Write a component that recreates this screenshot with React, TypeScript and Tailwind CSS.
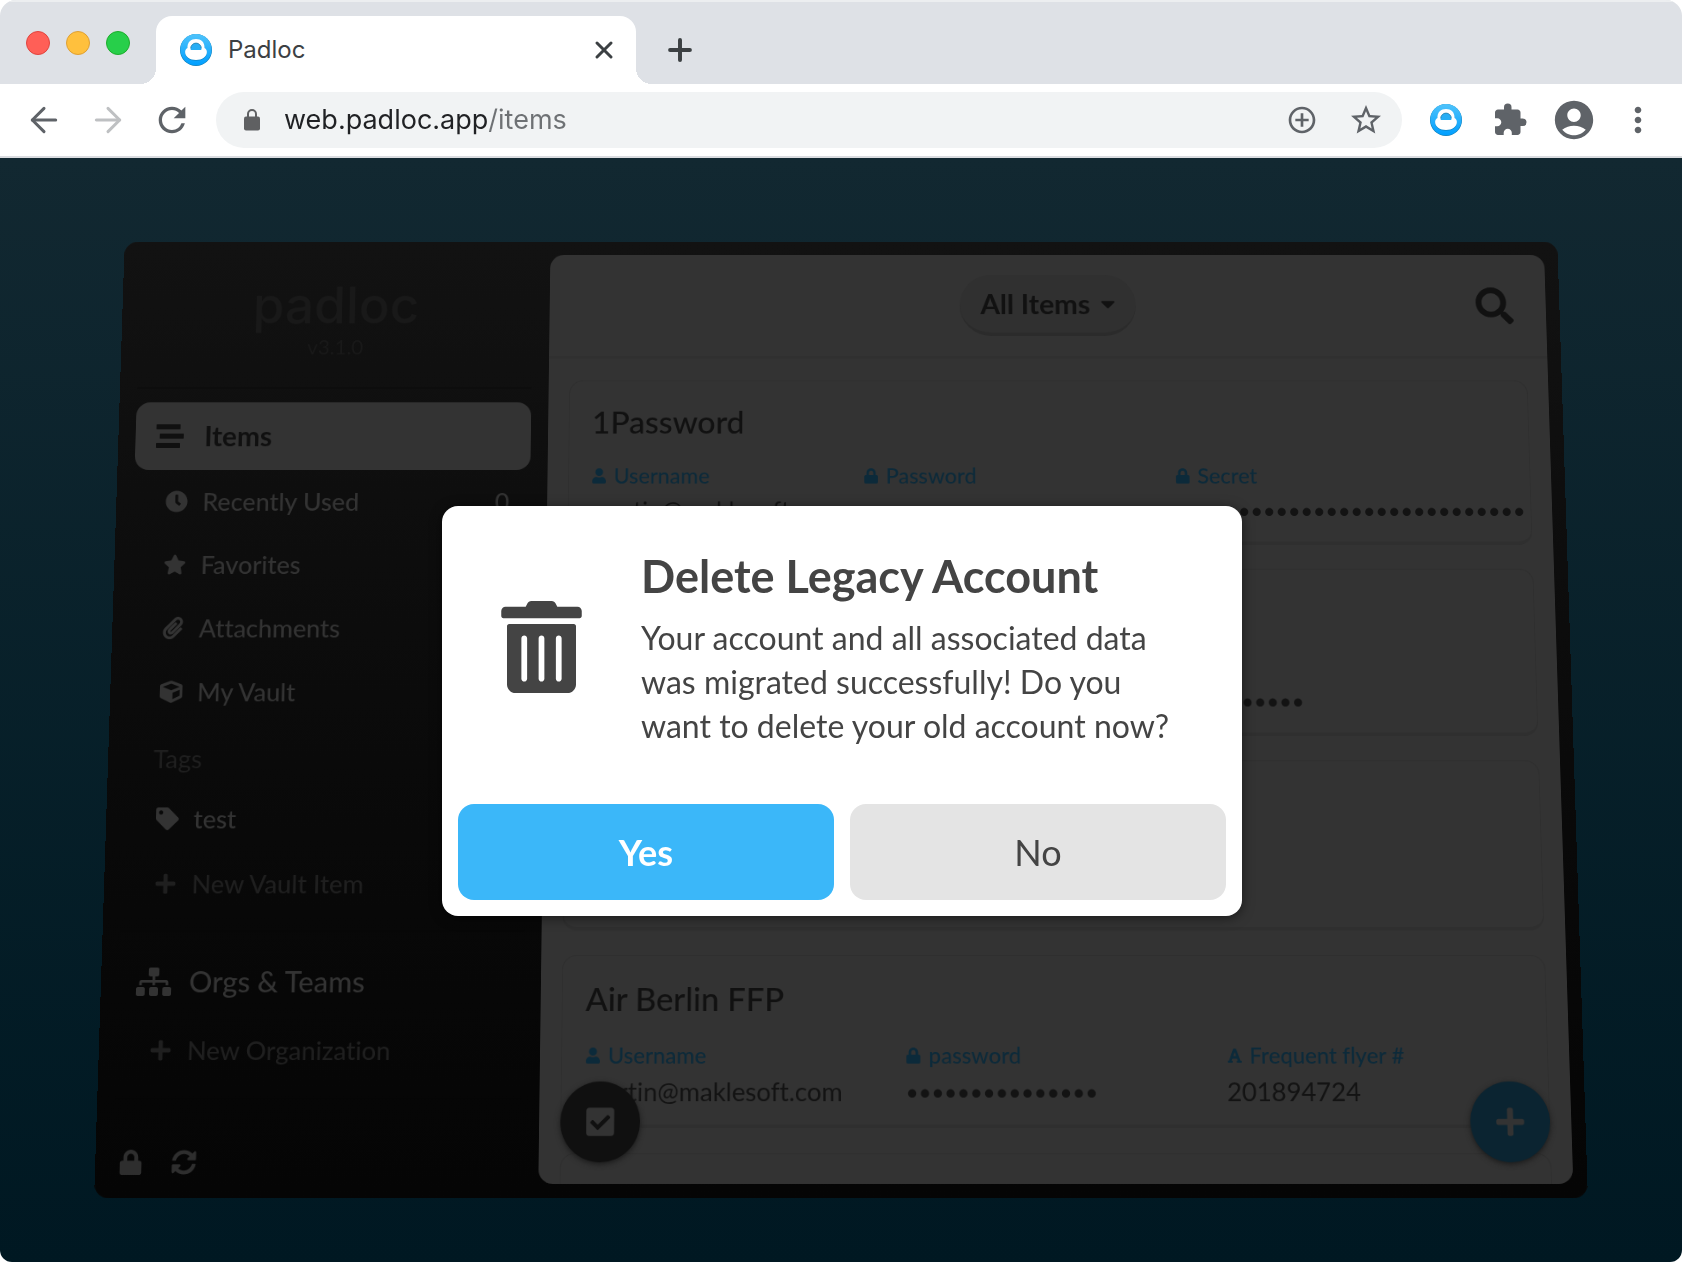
import { useId, type ReactNode } from "react";
import { ArrowLeft, ArrowRight, Plus, X } from "lucide-react";
import type { IconType } from "react-icons";
import {
  MdAccountCircle,
  MdAddCircleOutline,
  MdExtension,
  MdMoreVert,
  MdRefresh,
  MdStarBorder,
} from "react-icons/md";
import {
  FaCaretDown,
  FaCheckSquare,
  FaClock,
  FaCube,
  FaFont,
  FaLock,
  FaPaperclip,
  FaPlus,
  FaSearch,
  FaSitemap,
  FaStar,
  FaStream,
  FaSyncAlt,
  FaTag,
  FaUser,
} from "react-icons/fa";

function PadlocMark() {
  const id = useId();
  return (
    <svg viewBox="0 0 32 32" className="size-8 shrink-0" aria-hidden="true">
      <defs>
        <linearGradient id={id} x1="0" y1="0" x2="0" y2="1">
          <stop offset="0" stopColor="#4fc3fb" />
          <stop offset="1" stopColor="#009fff" />
        </linearGradient>
      </defs>
      <circle cx="16" cy="16" r="16" fill="#1580b8" />
      <circle cx="16" cy="15.6" r="15.6" fill={`url(#${id})`} />
      <path
        d="M7.4 14.8C7.200 9 11 6 16 6s8.800 3 8.600 8.800c1.500 1 2.300 2.400 2.300 4 0 4.600-4.600 8-10.900 8S5.100 23.400 5.100 18.800c0-1.600.8-3 2.300-4z"
        fill="#0f86c9"
      />
      <path
        d="M7.4 14C7.200 8.200 11 5 16 5s8.800 3.200 8.600 9c1.500 1 2.300 2.400 2.300 4 0 4.600-4.600 8-10.900 8S5.100 22.600 5.100 18c0-1.600.8-3 2.300-4z"
        fill="#fff"
      />
      <path d="M10.700 16v-1.600a5.300 5.300 0 0 1 10.600 0V16z" fill="#27aef5" />
      <path d="M10.700 14.400a5.300 5.300 0 0 1 10.600 0" fill="none" stroke="#1878a8" strokeWidth=".8" />
    </svg>
  );
}

function SiteLock() {
  return (
    <svg viewBox="0 0 16 22" className="h-[22px] w-4 shrink-0 text-[#5f6062]" aria-hidden="true">
      <rect y="7.500" width="16" height="14" rx="2" fill="currentColor" />
      <path d="M4 8.500V5a4 4 0 0 1 8 0v3.500" fill="none" stroke="currentColor" strokeWidth="2" />
    </svg>
  );
}

function TrashIcon() {
  return (
    <svg viewBox="0 0 448 512" className="h-[92px] w-[81px] fill-current" aria-hidden="true">
      <path d="M0 84V56c0-13.300 10.700-24 24-24h112l9.400-18.700c4-8.200 12.300-13.300 21.400-13.300h114.300c9.100 0 17.400 5.100 21.500 13.300L312 32h112c13.300 0 24 10.700 24 24v28c0 6.600-5.400 12-12 12H12C5.400 96 0 90.600 0 84zm416 56v324c0 26.500-21.500 48-48 48H80c-26.500 0-48-21.500-48-48V140c0-6.600 5.400-12 12-12h360c6.600 0 12 5.400 12 12zm-272 68c0-8.800-7.200-16-16-16s-16 7.200-16 16v224c0 8.800 7.200 16 16 16s16-7.200 16-16V208zm96 0c0-8.800-7.200-16-16-16s-16 7.200-16 16v224c0 8.800 7.200 16 16 16s16-7.200 16-16V208zm96 0c0-8.800-7.200-16-16-16s-16 7.200-16 16v224c0 8.800 7.200 16 16 16s16-7.200 16-16V208z" />
    </svg>
  );
}

function TabStrip() {
  return (
    <div className="flex items-end bg-[#dee1e6] pl-[26px] shadow-[inset_0_2px_0_#eceef0]">
      <div className="flex h-[84px] items-center gap-4 pt-0.5">
        <button aria-label="Close window" className="size-6 rounded-full border border-[#e0443e] bg-[#ff5f57]" />
        <button aria-label="Minimize window" className="size-6 rounded-full border border-[#dfa033] bg-[#ffc03d]" />
        <button aria-label="Zoom window" className="size-6 rounded-full border border-[#1dad2b] bg-[#27cf4a]" />
      </div>
      <div className="relative ml-[26px] flex h-[68px] w-[480px] items-center rounded-t-2xl bg-white pr-[18px] pl-6 before:absolute before:bottom-0 before:-left-4 before:size-4 before:bg-[radial-gradient(circle_at_0_0,transparent_16px,white_16px)] after:absolute after:-right-4 after:bottom-0 after:size-4 after:bg-[radial-gradient(circle_at_100%_0,transparent_16px,white_16px)]">
        <PadlocMark />
        <span className="ml-4 flex-1 text-2xl text-[#3c4043]">Padloc</span>
        <button aria-label="Close tab" className="text-[#3c4043]">
          <X size={28} strokeWidth={2.6} />
        </button>
      </div>
      <button aria-label="New tab" className="ml-[27px] flex h-[68px] items-center text-[#3c4043]">
        <Plus size={34} strokeWidth={2.8} />
      </button>
    </div>
  );
}

function BarButton({ label, children, className = "" }: { label: string; children: ReactNode; className?: string }) {
  return (
    <button aria-label={label} className={`flex w-16 shrink-0 items-center justify-center text-[#5f6368] ${className}`}>
      {children}
    </button>
  );
}

function Toolbar() {
  return (
    <div className="flex h-[74px] shrink-0 items-center border-b-2 border-[#dadce0] bg-white px-3">
      <BarButton label="Back">
        <ArrowLeft size={40} strokeWidth={1.8} />
      </BarButton>
      <BarButton label="Forward" className="opacity-40">
        <ArrowRight size={40} strokeWidth={1.8} />
      </BarButton>
      <BarButton label="Reload">
        <MdRefresh size={40} />
      </BarButton>
      <div className="mx-3 flex h-14 min-w-0 flex-1 items-center rounded-full bg-[#f1f3f4] pr-1 pl-7">
        <SiteLock />
        <input
          aria-label="Address"
          defaultValue="web.padloc.app/items"
          className="ml-6 min-w-0 flex-1 bg-[linear-gradient(to_right,#202124_204px,#6e7174_204px)] bg-clip-text text-[27px] text-transparent outline-none"
        />
        <BarButton label="Zoom">
          <MdAddCircleOutline size={32} />
        </BarButton>
        <BarButton label="Bookmark this page">
          <MdStarBorder size={36} />
        </BarButton>
      </div>
      <BarButton label="Padloc">
        <PadlocMark />
      </BarButton>
      <BarButton label="Extensions">
        <MdExtension size={36} />
      </BarButton>
      <BarButton label="Profile">
        <MdAccountCircle size={46} />
      </BarButton>
      <BarButton label="Menu">
        <MdMoreVert size={40} />
      </BarButton>
    </div>
  );
}

function SubItem({ icon: Icon, label, count, dim = false }: { icon: IconType; label: string; count?: number; dim?: boolean }) {
  return (
    <li>
      <button
        className={
          dim
            ? "flex h-[74px] w-full items-center gap-3 pr-6 pl-8 text-[#1f1f1f]"
            : "flex h-[74px] w-full items-center gap-3 pr-6 pl-8 text-[#333333]"
        }
      >
        <span className="flex w-9 justify-center">
          <Icon size={26} />
        </span>
        <span className="flex-1 text-left">{label}</span>
        {count !== undefined && <span>{count}</span>}
      </button>
    </li>
  );
}

function Sidebar() {
  return (
    <nav className="flex w-[500px] shrink-0 flex-col px-5 text-[29px] font-medium">
      <div className="flex h-[174px] flex-col items-center pt-8 text-[#191919]">
        <span className="font-['Inter'] text-[60px] leading-[88px] font-medium">padloc</span>
        <span className="text-2xl leading-3 font-normal">v3.1.0</span>
      </div>
      <hr className="border-t-2 border-[#0d0d0d]" />
      <button className="mt-4 flex h-20 w-full shrink-0 items-center gap-5 rounded-2xl bg-[#333333] pl-5 text-[32px] font-bold text-[#101010]">
        <span className="flex w-10 justify-center">
          <FaStream size={32} />
        </span>
        Items
      </button>
      <ul>
        <SubItem icon={FaClock} label="Recently Used" count={0} />
        <SubItem icon={FaStar} label="Favorites" />
        <SubItem icon={FaPaperclip} label="Attachments" />
        <SubItem icon={FaCube} label="My Vault" />
      </ul>
      <h2 className="flex h-[72px] items-center pt-2 pl-8 font-normal text-[#1f1f1f]">Tags</h2>
      <ul>
        <SubItem icon={FaTag} label="test" />
        <SubItem icon={FaPlus} label="New Vault Item" dim />
      </ul>
      <hr className="mt-4 border-t-2 border-[#070707]" />
      <button className="mt-4 flex h-20 w-full shrink-0 items-center gap-5 pl-5 text-[33px] text-[#333333]">
        <span className="flex w-10 justify-center">
          <FaSitemap size={40} />
        </span>
        Orgs &amp; Teams
      </button>
      <ul>
        <SubItem icon={FaPlus} label="New Organization" dim />
      </ul>
      <hr className="mt-4 border-t-2 border-[#050505]" />
      <div className="-mx-2.5 mt-auto mb-2.5 flex text-[#2e2e2e]">
        <button aria-label="Lock" className="flex size-[60px] items-center justify-center">
          <FaLock size={28} />
        </button>
        <button aria-label="Sync" className="flex size-[60px] items-center justify-center">
          <FaSyncAlt size={28} />
        </button>
      </div>
    </nav>
  );
}

function Card({ title, children }: { title?: string; children?: ReactNode }) {
  return (
    <article className="h-[194px] shrink-0 overflow-hidden rounded-2xl border border-b-4 border-[#2f2f2f] pl-[26px]">
      <h3 className="mt-6 h-12 text-[37px] leading-[48px] font-medium text-[#111111]">{title}</h3>
      {children}
    </article>
  );
}

function Field({ icon: Icon, name, value }: { icon?: IconType; name?: string; value: string }) {
  return (
    <div className="min-w-0">
      <dt className="flex h-8 items-center gap-2 text-[25px] font-medium text-[#0c2a3a]">
        {Icon && <Icon size={18} />}
        {name}
      </dt>
      <dd className="mt-1 text-[29px] leading-10 whitespace-nowrap text-[#131313]">{value}</dd>
    </div>
  );
}

function SecretField({ icon: Icon, name, length }: { icon?: IconType; name?: string; length: number }) {
  return (
    <div className="min-w-0">
      <dt className="flex h-8 items-center gap-2 text-[25px] font-medium text-[#0c2a3a]">
        {Icon && <Icon size={18} />}
        {name}
      </dt>
      <dd className="mt-1 text-[25px] leading-10 whitespace-nowrap text-[#131313]">{"•".repeat(length)}</dd>
    </div>
  );
}

function ItemsView() {
  return (
    <main className="relative my-4 mr-4 flex min-w-0 flex-1 flex-col overflow-hidden rounded-2xl bg-[#333333]">
      <header className="grid h-[124px] shrink-0 grid-cols-[1fr_auto_1fr] items-center border-b-3 border-[#303030]">
        <span />
        <button className="flex h-[73px] items-center gap-3 rounded-full border-b-4 border-[#2b2b2b] bg-[#303030] px-6 text-[33px] font-bold text-[#111111]">
          All Items
          <FaCaretDown className="h-[27px] w-[17px]" />
        </button>
        <button aria-label="Search" className="mr-[38px] justify-self-end text-[#111111]">
          <FaSearch size={44} />
        </button>
      </header>
      <div className="flex min-h-0 flex-1 flex-col gap-7 overflow-hidden px-6 pt-[26px]">
        <Card title="1Password">
          <dl className="mt-6 grid grid-cols-[316px_362px_1fr]">
            <Field icon={FaUser} name="Username" value="martin@maklesoft.com" />
            <SecretField icon={FaLock} name="Password" length={20} />
            <SecretField icon={FaLock} name="Secret" length={28} />
          </dl>
        </Card>
        <Card>
          <dl className="mt-6 flex justify-end pr-[267px]">
            <SecretField length={9} />
          </dl>
        </Card>
        <Card />
        <Card title="Air Berlin FFP">
          <dl className="mt-6 grid grid-cols-3">
            <Field icon={FaUser} name="Username" value="martin@maklesoft.com" />
            <SecretField icon={FaLock} name="password" length={15} />
            <Field icon={FaFont} name="Frequent flyer #" value="201894724" />
          </dl>
        </Card>
        <Card />
      </div>
      <button
        aria-label="Select items"
        className="absolute bottom-6 left-6 flex size-[90px] items-center justify-center rounded-full bg-[#101010] text-[#333333] shadow-[0_2px_6px_#1a1a1a]"
      >
        <FaCheckSquare size={36} />
      </button>
      <button
        aria-label="Add item"
        className="absolute right-6 bottom-6 flex size-[90px] items-center justify-center rounded-full bg-[#0b2431] text-[#333333] shadow-[0_2px_6px_#1a1a1a]"
      >
        <FaPlus size={36} />
      </button>
    </main>
  );
}

function ConfirmDialog() {
  return (
    <div
      role="dialog"
      aria-modal="true"
      aria-labelledby="dialog-title"
      className="w-[800px] rounded-2xl bg-white text-[#444444] shadow-[0_2px_12px_rgba(0,0,0,0.5)]"
    >
      <div className="flex items-center py-10">
        <div className="flex w-[199px] shrink-0 justify-center">
          <TrashIcon />
        </div>
        <div className="flex-1 pr-12">
          <h1 id="dialog-title" className="text-[45px] leading-[60px] font-bold">
            Delete Legacy Account
          </h1>
          <p className="mt-2.5 text-[32px] leading-[44px]">
            Your account and all associated data was migrated successfully! Do you want to delete your old account now?
          </p>
        </div>
      </div>
      <div className="grid grid-cols-2 gap-4 p-4">
        <button className="h-24 rounded-2xl bg-[#3bb7f9] text-[36px] font-bold text-white">Yes</button>
        <button className="h-24 rounded-2xl bg-[#e4e4e4] text-[36px]">No</button>
      </div>
    </div>
  );
}

export default function App() {
  return (
    <div className="flex h-screen bg-white">
      <div className="flex min-w-0 flex-1 flex-col overflow-hidden rounded-t-2xl rounded-b-xl font-['Inter',sans-serif]">
        <TabStrip />
        <Toolbar />
        <div className="relative flex min-h-0 flex-1 overflow-hidden bg-linear-to-b from-[#122831] to-[#001822] font-['Lato',sans-serif] [font-variant-ligatures:none] perspective-[2000px]">
          <div className="flex min-w-0 flex-1 transform-[translate3d(0,0,-300px)_rotateX(5deg)] rounded-2xl bg-linear-to-b from-[#121212] to-[#050505]">
            <Sidebar />
            <ItemsView />
          </div>
          <div className="absolute inset-0 flex items-center justify-center pt-0.5 pl-0.5">
            <ConfirmDialog />
          </div>
        </div>
      </div>
    </div>
  );
}
